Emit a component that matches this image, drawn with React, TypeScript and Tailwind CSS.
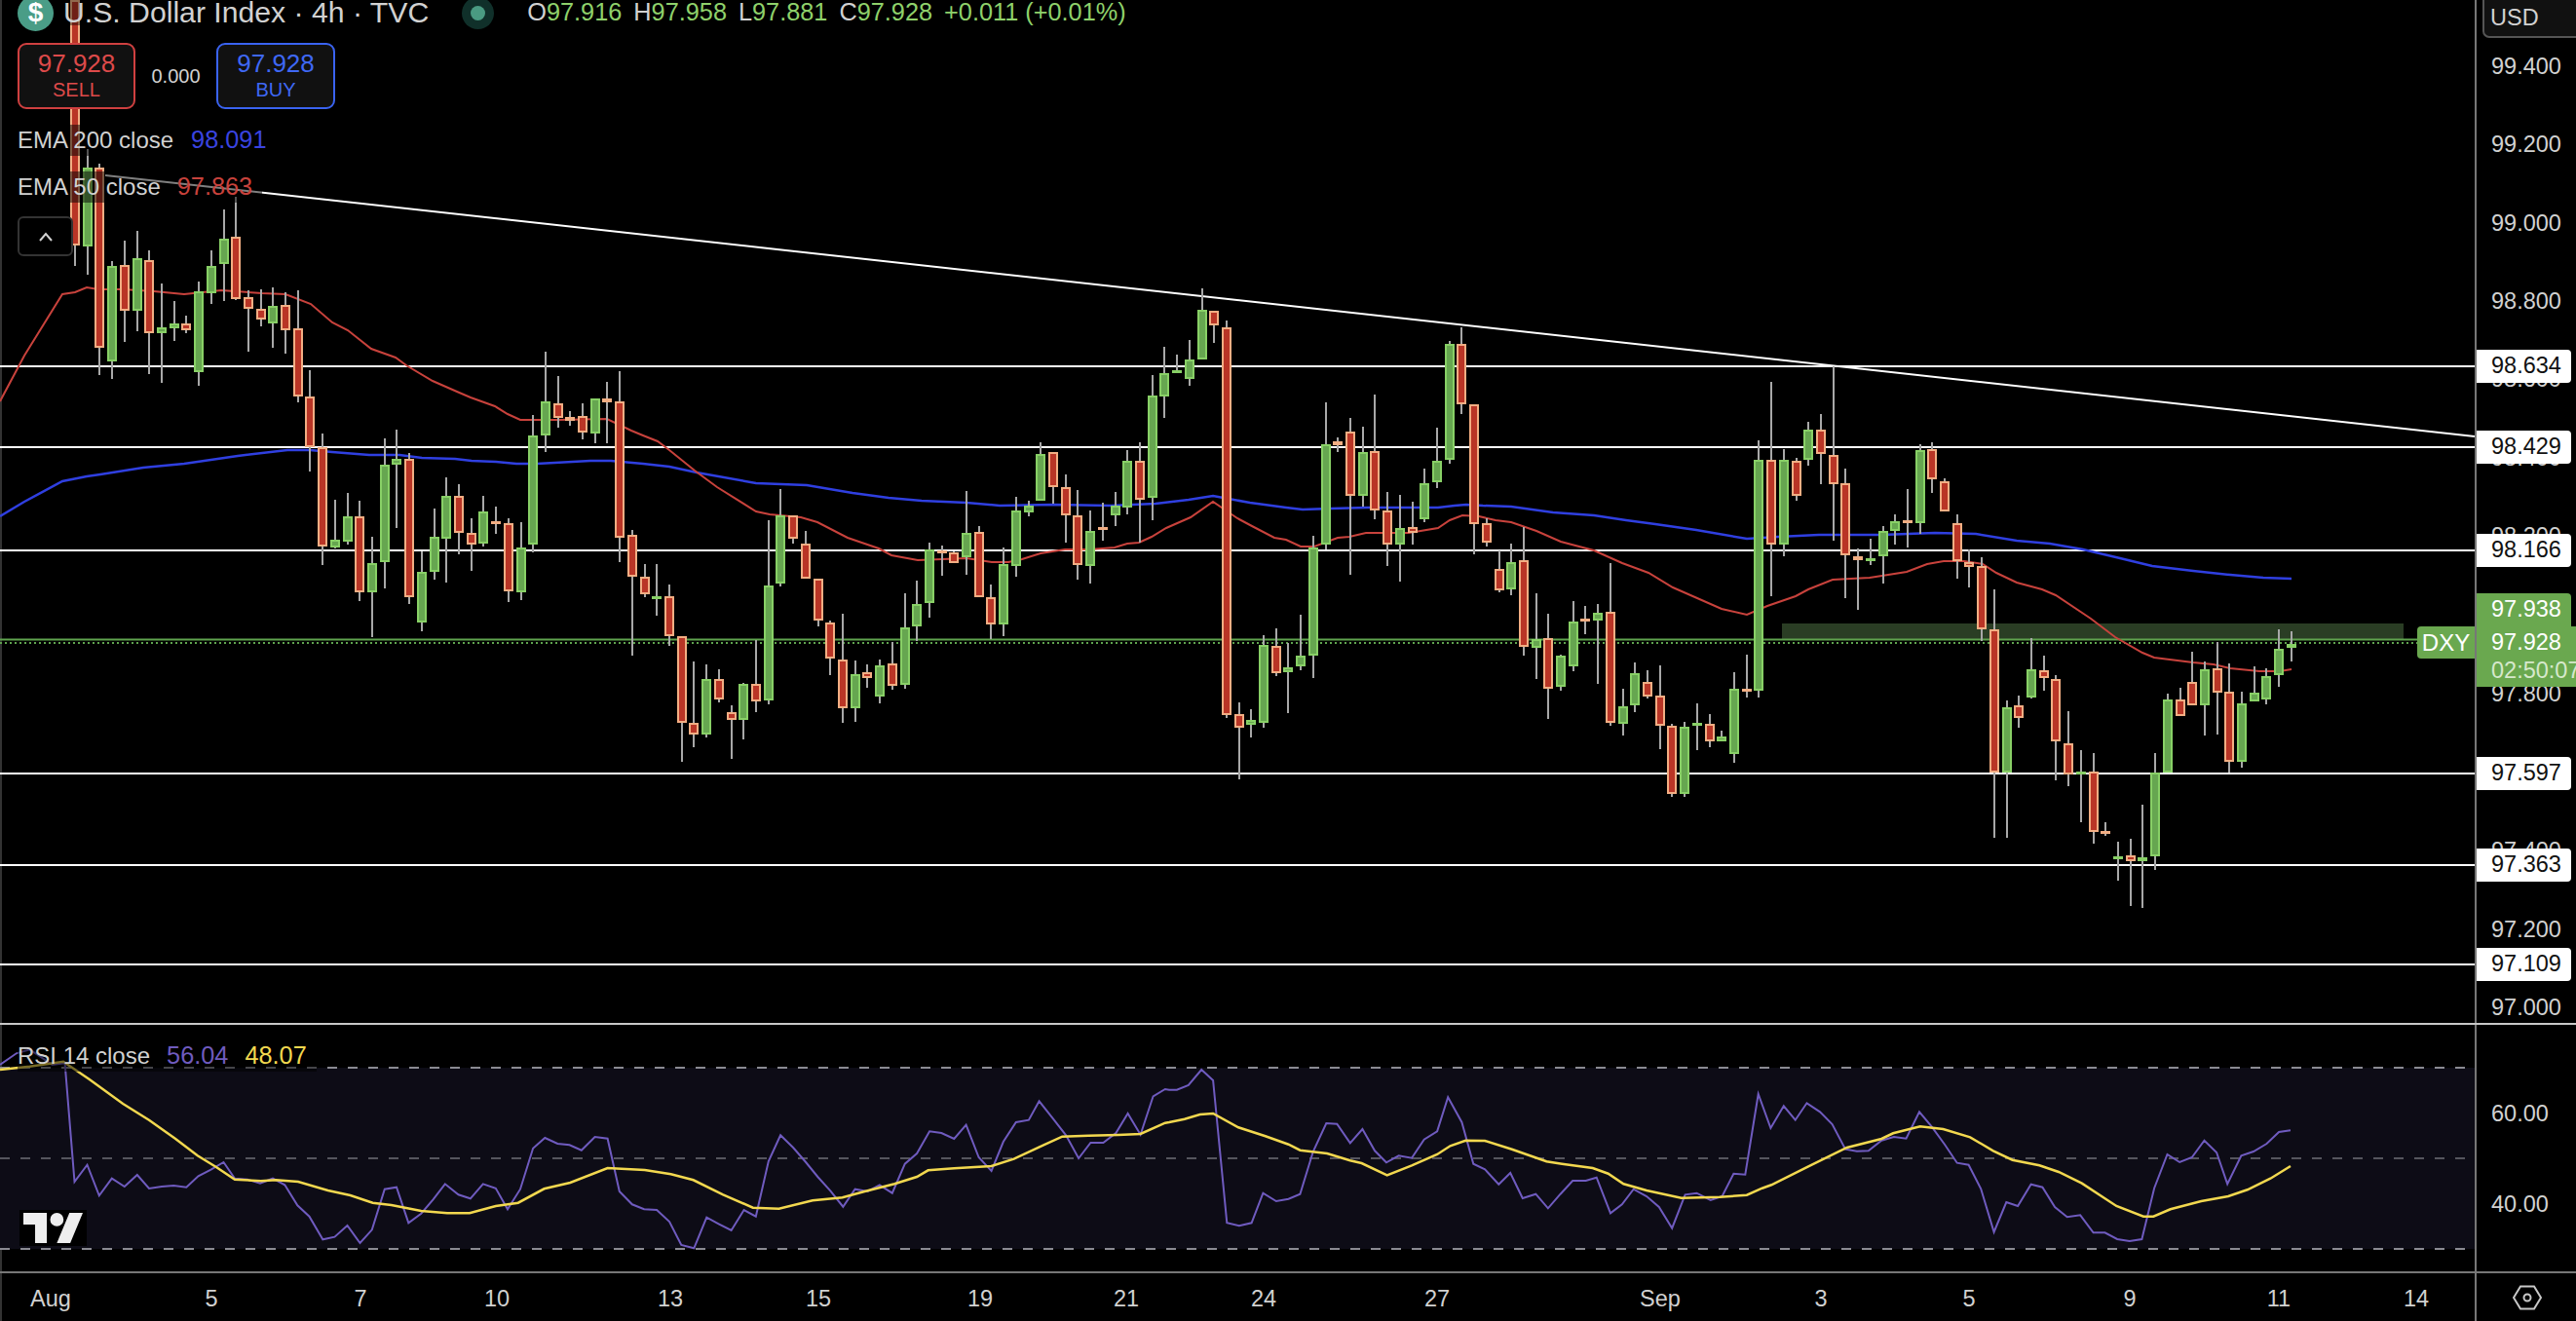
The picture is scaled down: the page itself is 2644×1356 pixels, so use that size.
import React from "react";

// candle: g(reen)=1 / r(ed)=0, body top, body bottom, wick top, wick bottom (pane pixels)
const CANDLES: number[][] = [
[0,0,252,0,273],[1,172,253,153,282],[0,172,357,168,385],[1,273,371,268,389],[0,272,319,247,351],[1,265,319,237,340],[0,267,342,257,384],[1,336,342,291,393],[1,332,337,309,350],[0,332,339,324,342],
[1,299,382,289,396],[1,273,301,257,312],[1,245,271,215,309],[0,243,307,202,308],[0,305,317,298,361],[0,317,328,297,335],[1,314,332,295,357],[0,313,339,300,363],[0,337,407,298,413],[0,407,459,380,484],
[0,459,561,445,580],[1,554,562,513,563],[1,530,556,506,559],[0,530,608,514,617],[1,578,608,551,654],[1,477,577,450,604],[1,471,477,441,542],[0,471,613,465,620],[1,587,639,566,648],[1,551,587,522,595],
[1,509,553,490,598],[0,509,547,497,569],[0,547,559,532,586],[1,525,558,509,561],[0,535,537,520,548],[0,537,607,532,618],[1,562,608,536,616],[1,447,559,426,567],[1,412,447,361,464],[0,414,429,386,439],
[0,428,432,422,437],[0,427,444,414,451],[1,409,445,409,455],[0,409,413,392,455],[0,412,552,381,577],[0,549,592,544,673],[0,592,610,579,613],[1,612,614,579,632],[0,612,653,600,663],[0,653,742,653,782],
[0,742,754,679,767],[1,697,754,682,757],[0,697,718,687,721],[0,731,739,724,779],[1,702,739,701,759],[0,702,720,657,731],[1,601,719,534,723],[1,529,599,502,602],[0,529,553,529,558],[0,558,594,545,594],
[0,594,637,594,643],[0,639,676,637,693],[0,677,727,630,742],[1,692,727,678,741],[0,690,696,682,706],[1,683,715,677,722],[0,681,704,659,708],[1,644,703,609,707],[1,620,643,596,658],[1,564,619,557,634],
[0,565,567,560,591],[0,567,578,566,578],[1,547,572,504,590],[0,546,613,540,613],[0,613,641,600,656],[1,579,641,562,653],[1,524,581,510,592],[1,519,526,514,530],[1,466,514,454,514],[0,464,500,464,517],
[0,500,529,487,557],[0,529,580,503,595],[1,545,581,524,599],[0,541,543,516,555],[1,519,529,505,540],[1,473,521,462,528],[0,473,513,454,557],[1,406,511,385,534],[1,383,407,356,429],[1,380,382,364,383],
[1,369,389,349,396],[1,318,369,296,369],[0,319,334,319,352],[0,336,734,329,737],[0,733,747,721,800],[1,739,744,728,757],[1,662,742,652,747],[0,663,691,645,694],[1,685,690,660,732],[1,673,684,631,688],
[1,562,673,550,696],[1,456,559,413,564],[0,453,457,449,464],[0,443,509,429,590],[1,464,509,438,520],[0,463,524,405,533],[0,524,559,505,581],[1,542,559,508,597],[0,541,547,515,559],[1,496,533,481,536],
[1,473,495,439,501],[1,353,472,350,476],[0,353,415,336,425],[0,415,538,415,569],[0,537,557,532,561],[0,584,606,565,608],[1,577,605,558,611],[0,575,664,541,673],[1,656,665,609,697],[0,655,707,630,738],
[1,673,705,672,709],[1,638,684,617,689],[0,635,637,622,651],[1,629,637,620,702],[0,628,742,578,745],[1,725,743,707,755],[1,691,724,680,731],[0,700,715,688,717],[0,714,745,683,769],[0,745,815,743,818],
[1,746,815,741,818],[1,742,745,722,770],[0,743,761,733,767],[1,756,761,750,761],[1,707,774,690,783],[0,707,709,672,716],[1,472,709,452,716],[0,472,559,392,612],[1,472,559,461,571],[0,473,509,470,514],
[1,441,472,433,478],[0,441,466,425,497],[0,467,497,376,555],[0,496,570,481,614],[0,571,575,563,626],[1,573,575,553,580],[1,545,571,540,599],[1,535,545,528,559],[0,534,536,502,562],[1,462,537,456,548],
[0,461,492,454,506],[0,494,525,491,525],[0,537,576,528,594],[0,577,582,564,603],[0,581,646,572,658],[0,646,793,605,860],[1,726,793,719,860],[0,724,737,714,747],[1,687,716,655,717],[0,688,696,673,709],
[0,697,761,693,801],[0,763,795,730,807],[1,792,794,770,844],[0,792,854,773,866],[0,853,855,844,858],[1,879,881,864,904],[0,878,884,861,930],[1,880,884,826,932],[1,793,879,773,893],[1,718,793,712,793],
[0,718,735,706,735],[0,700,724,669,724],[1,687,724,679,755],[0,686,711,659,754],[0,710,782,681,793],[1,722,782,710,788],[1,711,720,684,720],[1,694,718,686,723],[1,666,693,646,705],[1,661,665,648,679],
];

const cx = (k: number) => 77 + (12.709 * k);

const EMA50 = "0,412 25,365 64,302 77,300 89,295 101,297 126,297 158,299 189,302 227,298 269,301 293,302 319,312 341,331 357,339 381,358 406,367 417,375 444,391 469,402 483,408 508,417 521,425 534,431 572,431 623,430 648,442 660,447 675,453 687,462 713,483 736,500 776,525 790,528 822,531 839,536 870,552 902,563 915,570 942,575 992,573 1018,577 1035,577 1049,574 1068,568 1093,564 1119,564 1144,562 1157,558 1169,557 1182,551 1197,542 1222,531 1245,515 1270,532 1285,540 1308,552 1320,554 1335,561 1349,561 1373,552 1385,551 1402,547 1425,547 1446,547 1476,542 1488,534 1501,529 1518,530 1535,534 1551,536 1577,545 1602,556 1636,565 1665,578 1692,588 1717,603 1767,625 1793,631 1814,622 1843,612 1856,605 1881,595 1919,593 1957,587 1978,579 1995,576 2016,576 2035,579 2049,588 2070,598 2096,605 2110,611 2146,635 2171,654 2199,670 2211,675 2251,680 2272,682 2289,686 2319,689 2340,689 2352,687";
const EMA200 = "0,530 25,515 64,494 89,489 103,487 147,480 189,476 244,468 295,462 318,462 341,464 379,467 410,467 433,470 467,471 484,473 509,474 530,476 551,476 606,473 627,473 660,476 687,479 715,485 776,496 828,498 875,506 912,511 946,514 992,516 1026,519 1081,518 1140,519 1186,517 1220,513 1245,509 1283,516 1320,521 1337,523 1366,522 1404,521 1459,521 1476,521 1493,519 1505,518 1522,519 1551,520 1594,526 1636,529 1669,534 1699,538 1741,544 1793,553 1825,551 1867,549 1931,549 1986,547 2028,548 2070,555 2104,558 2138,564 2176,573 2209,581 2251,586 2289,590 2323,593 2352,594";

const RSI_A = [[0,165],[22,130],[40,118],[70,165],[87,160],[100,525],[117,473],[133,568],[150,515],[167,540],[184,504],[200,546],[217,540],[233,537],[250,542],[266,508],[283,488],[300,465],[315,515],[332,518],[349,530],[366,515],[382,535],[399,598],[415,632],[433,703],[449,695],[466,660],[483,714],[499,673],[516,548],[532,542],[548,652],[565,623],[581,580],[597,532],[615,565],[631,577],[648,532],[665,545],[681,610],[698,548],[715,422],[731,390],[748,408],[764,412],[780,428],[798,387],[815,392],[831,555],[848,595],[864,610],[881,612],[898,648],[914,720],[931,730],[948,635],[964,655],[981,675],[998,612],[1014,632],[1031,462],[1047,382],[1064,420],[1081,465],[1097,510],[1114,553],[1131,602],[1147,548],[1164,555],[1180,535],[1197,560],[1214,470],[1230,438],[1247,370],[1263,375],[1280,393],[1296,350],[1313,450],[1330,492],[1346,402],[1363,342],[1380,335],[1394,277],[1413,332],[1430,382],[1447,453],[1463,405],[1480,405],[1497,375],[1513,315],[1530,380],[1547,262],[1563,240]];
const RSI_B = [[0,242],[10,242],[25,228],[42,180],[57,213],[75,652],[91,661],[107,652],[122,560],[139,585],[155,578],[170,563],[187,432],[204,345],[218,347],[235,406],[251,363],[267,430],[282,466],[298,445],[315,452],[331,395],[348,370],[362,265],[380,342],[395,470],[410,487],[428,533],[443,498],[459,576],[476,563],[492,607],[508,563],[524,522],[541,522],[555,512],[573,622],[588,595],[603,548],[620,570],[636,603],[653,668],[670,565],[685,560],[703,582],[718,570],[733,500],[748,503],[765,255],[781,360],[798,292],[813,335],[828,283],[845,310],[861,348],[878,425],[893,431],[908,430],[925,398],[941,387],[957,392],[974,310],[990,355],[1007,410],[1023,467],[1038,473],[1054,547],[1071,680],[1087,588],[1102,600],[1119,533],[1134,542],[1150,603],[1166,634],[1183,628],[1200,682],[1215,682],[1231,702],[1247,708],[1263,702],[1279,545],[1296,441],[1312,465],[1328,450],[1344,398],[1360,435],[1374,532],[1392,445],[1408,432],[1425,408],[1441,372],[1456,367]];
const YEL_A = [[0,180],[40,170],[85,155],[120,210],[165,285],[200,335],[235,392],[265,445],[290,480],[315,518],[350,523],[370,520],[400,525],[440,552],[470,567],[500,590],[525,597],[565,615],[600,622],[630,622],[665,600],[695,590],[730,547],[765,528],[815,483],[865,489],[900,502],[930,520],[970,565],[1010,605],[1045,608],[1090,583],[1130,574],[1160,555],[1200,532],[1230,510],[1245,490],[1280,484],[1330,477],[1360,455],[1400,412],[1425,386],[1460,383],[1500,381],[1530,378],[1563,344]];
const YEL_B = [[0,342],[20,332],[40,318],[57,315],[90,358],[125,385],[155,410],[170,428],[205,438],[235,460],[250,468],[283,505],[315,475],[348,441],[365,415],[385,398],[410,399],[445,425],[490,463],[510,470],[550,483],[570,500],[590,532],[620,552],[665,575],[715,572],[750,566],[770,545],[782,535],[830,478],[880,420],[925,393],[940,376],[975,355],[1005,363],[1040,388],[1070,430],[1095,458],[1130,475],[1155,495],[1185,530],[1230,600],[1265,632],[1278,632],[1300,610],[1340,585],[1375,570],[1400,550],[1430,515],[1456,477]];

// RSI pane starts at y=1054 of the page
const toA = (p: number[]) => `${(p[0] / 1.307).toFixed(1)},${(1040 + p[1] / 3 - 1054).toFixed(1)}`;
const toB = (p: number[]) => `${(1200 + p[0] / 1.265).toFixed(1)},${(1040 + p[1] / 3 - 1054).toFixed(1)}`;
const RSI_LINE = [...RSI_A.map(toA), ...RSI_B.map(toB)].join(" ");
const YEL_LINE = [...YEL_A.map(toA), ...YEL_B.map(toB)].join(" ");

const Font = "font-['Liberation_Sans',Arial,sans-serif]";

const AXIS = [
  ["99.400", 68], ["99.200", 148], ["99.000", 229], ["98.800", 309], ["98.600", 389],
  ["98.400", 470], ["98.200", 550], ["97.800", 712], ["97.400", 873], ["97.200", 954], ["97.000", 1034],
] as [string, number][];

const LEVELS = [
  ["98.634", 376], ["98.429", 459], ["98.166", 565], ["97.597", 794], ["97.363", 888], ["97.109", 990],
] as [string, number][];

const TIMES = [
  ["Aug", 51], ["5", 216], ["7", 369], ["10", 509], ["13", 687], ["15", 839], ["19", 1005], ["21", 1155],
  ["24", 1296], ["27", 1474], ["Sep", 1703], ["3", 1868], ["5", 2020], ["9", 2185], ["11", 2338], ["14", 2479],
] as [string, number][];

function MainChart() {
  return (
    <svg width="2540" height="1050" className="absolute left-[-2px] top-0 block">
      <rect x="1829" y="640" width="638" height="16" fill="#2a3d24" />
      {LEVELS.map(([t, y]) => (
        <rect key={t} x="0" y={y - 1} width="2540" height="2" fill="#ffffff" />
      ))}
      <line x1="108" y1="180" x2="2540" y2="448" stroke="#ffffff" strokeWidth="2" />
      <rect x="0" y="655.5" width="2482" height="2" fill="#5fa34e" />
      <line x1="0" y1="660" x2="2482" y2="660" stroke="#5fa34e" strokeWidth="2" strokeDasharray="2 3" />
      <polyline points={EMA200} fill="none" stroke="#2f3fe0" strokeWidth="2.5" />
      <polyline points={EMA50} fill="none" stroke="#c8423c" strokeWidth="2" />
      {CANDLES.map((c, k) => {
        const x = Math.round(cx(k));
        const [g, top, bot, wt, wb] = c;
        const border = g ? "#88d066" : "#f2ae83";
        const fill = g ? "#66a650" : "#b93526";
        return (
          <g key={k}>
            <rect x={x - 1} y={wt} width="2" height={wb - wt} fill="#a8a8a8" />
            <rect x={x - 5} y={top} width="10" height={Math.max(bot - top, 3)} fill={border} />
            {bot - top > 4 && <rect x={x - 3} y={top + 2} width="6" height={bot - top - 4} fill={fill} />}
          </g>
        );
      })}
    </svg>
  );
}

function RsiChart() {
  return (
    <svg width="2540" height="253" className="absolute left-[-2px] top-0 block">
      <rect x="0" y="44" width="2540" height="186" fill="#0d0c16" />
      <line x1="0" y1="44" x2="2540" y2="44" stroke="#8a8a92" strokeWidth="2" strokeDasharray="10 11" />
      <line x1="0" y1="137" x2="2540" y2="137" stroke="#55555d" strokeWidth="2" strokeDasharray="10 11" />
      <line x1="0" y1="230" x2="2540" y2="230" stroke="#8a8a92" strokeWidth="2" strokeDasharray="10 11" />
      <polyline points={RSI_LINE} fill="none" stroke="#6f5bbf" strokeWidth="2" />
      <polyline points={YEL_LINE} fill="none" stroke="#f2d84f" strokeWidth="2.5" />
    </svg>
  );
}

export default function App() {
  return (
    <div className={`relative flex h-[1356px] w-[2644px] flex-col overflow-hidden bg-black ${Font}`}>
      {/* main pane */}
      <div className="flex h-[1052px] w-full border-b-2 border-[#c8c8c8]">
        <div className="relative h-full w-[2542px] border-r-2 border-[#777777] border-l-2 border-l-[#333333]">
          <MainChart />
          <div className="absolute left-[16px] top-0 flex flex-col items-start">
            <div className="flex h-[26px] items-center gap-[10px] bg-black/40 leading-none">
              <span className="flex h-[37px] w-[37px] shrink-0 items-center justify-center rounded-full bg-[#4a9d87] text-[28px] font-bold text-white">$</span>
              <span className="whitespace-nowrap text-[30.2px] text-[#d1d1d1]">U.S. Dollar Index · 4h · TVC</span>
              <span className="ml-[24px] flex h-[33px] w-[33px] shrink-0 items-center justify-center rounded-full bg-[#10302a]">
                <span className="h-[15px] w-[15px] rounded-full bg-[#4a9b82]" />
              </span>
              <span className="ml-[24px] flex gap-[12px] whitespace-nowrap text-[25.3px] text-[#8fd16b]">
                <span><span className="text-[#d1d1d1]">O</span>97.916</span>
                <span><span className="text-[#d1d1d1]">H</span>97.958</span>
                <span><span className="text-[#d1d1d1]">L</span>97.881</span>
                <span><span className="text-[#d1d1d1]">C</span>97.928</span>
                <span>+0.011 (+0.01%)</span>
              </span>
            </div>
            <div className="mt-[18px] flex items-center">
              <div className="flex h-[68px] w-[121px] flex-col items-center justify-center rounded-[9px] border-2 border-[#cf4040] bg-[#111111] text-[#dd4a4a]">
                <span className="text-[26px] leading-[28px] font-normal">97.928</span>
                <span className="text-[20px] leading-[26px]">SELL</span>
              </div>
              <span className="w-[83px] text-center text-[20px] text-[#d1d1d1]">0.000</span>
              <div className="flex h-[68px] w-[122px] flex-col items-center justify-center rounded-[9px] border-2 border-[#3a63f0] bg-[#111111] text-[#3f68f5]">
                <span className="text-[26px] leading-[28px]">97.928</span>
                <span className="text-[20px] leading-[26px]">BUY</span>
              </div>
            </div>
            <div className="mt-[16px] flex h-[32px] items-center gap-[18px] whitespace-nowrap bg-black/50 pr-[6px] text-[24px] text-[#d1d1d1]">
              <span>EMA 200 close</span><span className="text-[25.3px] text-[#3a44e0]">98.091</span>
            </div>
            <div className="mt-[16px] flex h-[32px] items-center gap-[17px] whitespace-nowrap bg-black/50 pr-[10px] text-[24px] text-[#d1d1d1]">
              <span>EMA 50 close</span><span className="text-[25.3px] text-[#c8423c]">97.863</span>
            </div>
            <div className="mt-[14px] flex h-[41px] w-[57px] items-center justify-center rounded-[6px] border-2 border-[#333333] bg-black">
              <svg width="18" height="12" viewBox="0 0 18 12" fill="none" stroke="#d1d1d1" strokeWidth="2">
                <path d="M3 10 L9 3 L15 10" />
              </svg>
            </div>
          </div>
          <div className="absolute left-[2479px] top-[643px] flex h-[33px] w-[59px] items-center justify-center rounded-l-[4px] bg-[#6aa84f] text-[24px] text-white">DXY</div>
        </div>
        <div className="relative h-full flex-1 text-[23.5px] leading-none text-[#d1d1d1]">
          <div className="absolute left-[6px] top-0 flex h-[39px] w-[110px] items-center rounded-bl-[7px] border-b-2 border-l-2 border-[#555555] bg-[#111111] pl-[6px]">USD</div>
          {AXIS.map(([t, y]) => (
            <span key={t} style={{ top: y - 11 }} className="absolute left-[15px]">{t}</span>
          ))}
          {LEVELS.map(([t, y]) => (
            <div key={t} style={{ top: y - 17 }} className="absolute left-0 flex h-[34px] w-[97px] items-center rounded-r-[4px] bg-white pl-[15px] text-[#111111]">{t}</div>
          ))}
          <div className="absolute left-0 top-[609px] flex h-[34px] w-[97px] items-center rounded-tr-[4px] bg-[#6aa84f] pl-[15px] text-white">97.938</div>
          <div className="absolute left-0 top-[643px] flex h-[62px] w-[102px] flex-col gap-[5px] overflow-hidden bg-[#6aa84f] pt-[5px] pl-[15px]">
            <span className="text-white">97.928</span>
            <span className="whitespace-nowrap text-[#d6e8cc]">02:50:07</span>
          </div>
        </div>
      </div>
      {/* RSI pane */}
      <div className="flex h-[255px] w-full border-b-2 border-[#777777]">
        <div className="relative h-full w-[2542px] border-r-2 border-[#777777] border-l-2 border-l-[#333333]">
          <RsiChart />
          <div className="absolute left-[16px] top-[16px] flex h-[32px] items-center gap-[17px] whitespace-nowrap bg-black/50 pr-[10px] text-[24px] text-[#d1d1d1]">
            <span>RSI 14 close</span>
            <span className="text-[25.3px] text-[#6f5bbf]">56.04</span>
            <span className="text-[25.3px] text-[#f2d84f]">48.07</span>
          </div>
          <div className="absolute left-[18px] top-[190px] bg-[#000000] px-[4px] py-[3px]">
            <svg width="61" height="31" viewBox="0 4 35.5 18" className="block" fill="#eeeeee">
              <path d="M14 22H7V11H0V4h14v18zM28 22h-8l7.5-18h8L28 22z" />
              <circle cx="20" cy="8" r="4" />
            </svg>
          </div>
        </div>
        <div className="relative h-full flex-1 text-[23.5px] leading-none text-[#d1d1d1]">
          <span className="absolute left-[15px] top-[80px]">60.00</span>
          <span className="absolute left-[15px] top-[173px]">40.00</span>
        </div>
      </div>
      {/* time axis */}
      <div className="flex min-h-0 w-full flex-1">
        <div className="relative h-full w-[2542px] border-r-2 border-[#777777] border-l-2 border-l-[#333333] text-[23.5px] leading-none text-[#d1d1d1]">
          {TIMES.map(([t, x], i) => (
            <span key={i} style={{ left: x - 1 }} className="absolute top-[15px] -translate-x-1/2">{t}</span>
          ))}
        </div>
        <div className="flex flex-1 items-center justify-center pl-[25px] pr-[23px]">
          <svg width="30" height="26" viewBox="0 0 30 26" fill="none" stroke="#c8c8c8" strokeWidth="2">
            <path d="M8 1.5 H22 L29 13 L22 24.5 H8 L1 13 Z" />
            <circle cx="15" cy="13" r="3.5" />
          </svg>
        </div>
      </div>
    </div>
  );
}
